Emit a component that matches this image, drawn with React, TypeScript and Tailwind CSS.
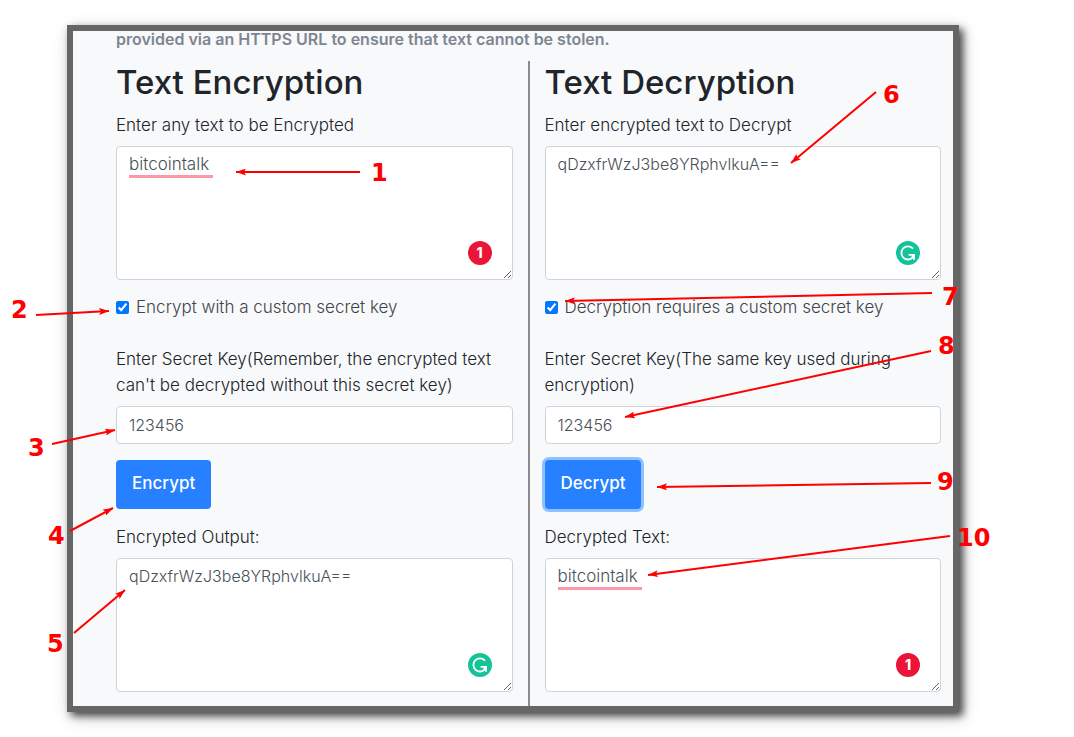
import { useState } from "react"

type TextPanelProps = {
  id: string
  label: string
  value: string
  misspelled?: boolean
  onChange?: (value: string) => void
}

const GrammarBadge = () => {
  return (
    <svg className="w-6 h-6" viewBox="0 0 24 24" fill="none">
      <circle cx="12" cy="12" r="12" fill="#15c39a" />
      <path d="M17 7.6A6.6 6.6 0 1 0 17.2 16" stroke="white" strokeWidth="1.8" />
      <path d="M12.6 13.9H17.9V18.8" stroke="white" strokeWidth="1.8" />
      <path d="M18.6 13.2V18.6L16.9 16.9L14.6 17.2L16.6 14Z" fill="white" />
    </svg>
  )
}

const TextPanel = ({ id, label, value, misspelled, onChange }: TextPanelProps) => {
  return (
    <div className="flex flex-col gap-2">
      <label htmlFor={id}>{label}</label>
      <div className="relative flex">
        <textarea
          id={id}
          value={value}
          spellCheck={false}
          readOnly={!onChange}
          onChange={(e) => onChange?.(e.target.value)}
          className={
            misspelled
              ? "w-full h-[134px] resize rounded border border-[#ced4da] bg-white px-3 py-1 text-[17px] text-[#495057] outline-none"
              : "w-full h-[134px] resize rounded border border-[#ced4da] bg-white px-3 py-1 text-base leading-[26px] text-[#495057] outline-none"
          }
        />
        {misspelled && <span className="absolute left-[13px] top-[29px] w-[84px] h-[3px] bg-[#fd97ab]" />}
        <div className="absolute right-[21px] bottom-[15px]">
          {misspelled ? (
            <span className="flex w-6 h-6 items-center justify-center rounded-full bg-[#ea1537] text-sm font-extrabold text-white">1</span>
          ) : (
            <GrammarBadge />
          )}
        </div>
      </div>
    </div>
  )
}

type CryptoColumnProps = {
  id: string
  title: string
  inputLabel: string
  initialText: string
  checkLabel: string
  keyLabel: string
  action: string
  outputLabel: string
  output: string
  highlighted?: boolean
}

const CryptoColumn = (props: CryptoColumnProps) => {
  const [text, setText] = useState(props.initialText)
  const [secret, setSecret] = useState("123456")
  const { id, highlighted } = props

  return (
    <section className="min-w-0">
      <h2 className="mb-[9px] text-[33px] leading-[42px] font-medium">{props.title}</h2>
      <TextPanel id={`${id}-text`} label={props.inputLabel} value={text} misspelled={!highlighted} onChange={setText} />
      <div className="mt-[14px] flex items-center gap-[7px] text-[#414549]">
        <input id={`${id}-custom`} type="checkbox" defaultChecked className="w-[13px] h-[13px] shrink-0 accent-[#0075ff]" />
        <label htmlFor={`${id}-custom`}>{props.checkLabel}</label>
      </div>
      <div className="mt-[26px] flex flex-col gap-2">
        <label htmlFor={`${id}-key`}>{props.keyLabel}</label>
        <input
          id={`${id}-key`}
          type="text"
          value={secret}
          onChange={(e) => setSecret(e.target.value)}
          className="w-full h-[38px] rounded border border-[#ced4da] bg-white px-3 text-base text-[#495057] outline-none"
        />
      </div>
      <button
        type="button"
        className={
          highlighted
            ? "mt-4 h-[49px] rounded bg-[#2680ff] px-4 pb-[3px] font-medium text-white ring-3 ring-[#8ec1ff]"
            : "mt-4 h-[49px] rounded bg-[#2680ff] px-4 pb-[3px] font-medium text-white"
        }
      >
        {props.action}
      </button>
      <div className="mt-[15px]">
        <TextPanel id={`${id}-output`} label={props.outputLabel} value={props.output} misspelled={highlighted} />
      </div>
    </section>
  )
}

const steps = [
  { n: 1, x: 371, y: 181, from: [360, 172], to: [236, 172] },
  { n: 2, x: 11, y: 318, from: [36, 315], to: [109, 311] },
  { n: 3, x: 28, y: 456, from: [52, 444], to: [115, 430] },
  { n: 4, x: 48, y: 544, from: [70, 531], to: [113, 508] },
  { n: 5, x: 47, y: 652, from: [74, 633], to: [125, 590] },
  { n: 6, x: 883, y: 103, from: [876, 92], to: [791, 163] },
  { n: 7, x: 942, y: 305, from: [932, 293], to: [565, 301] },
  { n: 8, x: 938, y: 354, from: [931, 351], to: [625, 417] },
  { n: 9, x: 937, y: 490, from: [931, 483], to: [657, 487] },
  { n: 10, x: 957, y: 546, from: [950, 536], to: [648, 575] },
]

// numbered arrows drawn on top of the form
const Annotations = () => {
  return (
    <svg className="pointer-events-none absolute left-0 top-0" width="1074" height="737" viewBox="0 0 1074 737">
      <defs>
        <marker id="arrow" viewBox="0 0 10 7" refX="10" refY="3.5" markerWidth="10" markerHeight="7" markerUnits="userSpaceOnUse" orient="auto">
          <path d="M10 3.5L0 0L2 3.5L0 7Z" fill="red" />
        </marker>
      </defs>
      {steps.map((step) => (
        <g key={step.n}>
          <line x1={step.from[0]} y1={step.from[1]} x2={step.to[0]} y2={step.to[1]} stroke="red" strokeWidth="2" markerEnd="url(#arrow)" />
          <text x={step.x} y={step.y} fill="red" className="font-['DejaVu_Sans'] text-2xl font-bold">
            {step.n}
          </text>
        </g>
      ))}
    </svg>
  )
}

const App = () => {
  return (
    <div className="relative bg-white pt-[25px] pb-[25px] pl-[67px] pr-[115px] font-['Inter',sans-serif] text-[17px] leading-[26px] font-light text-[#212529]">
      <main className="border-6 border-[#666666] bg-[#f8f9fb] pl-[43px] pr-3 shadow-[4px_4px_8px_rgba(0,0,0,0.7),3px_5px_18px_rgba(0,0,0,0.15)]">
        <p className="mb-[14px] text-base leading-4 font-semibold text-[#7d8690]">provided via an HTTPS URL to ensure that text cannot be stolen.</p>
        <div className="grid grid-cols-[1fr_2px_1fr] gap-x-[15px]">
          <CryptoColumn
            id="encrypt"
            title="Text Encryption"
            inputLabel="Enter any text to be Encrypted"
            initialText="bitcointalk"
            checkLabel="Encrypt with a custom secret key"
            keyLabel="Enter Secret Key(Remember, the encrypted text can't be decrypted without this secret key)"
            action="Encrypt"
            outputLabel="Encrypted Output:"
            output="qDzxfrWzJ3be8YRphvlkuA=="
          />
          <div className="-mb-[14px] bg-[#8b8b8b]" />
          <CryptoColumn
            id="decrypt"
            title="Text Decryption"
            inputLabel="Enter encrypted text to Decrypt"
            initialText="qDzxfrWzJ3be8YRphvlkuA=="
            checkLabel="Decryption requires a custom secret key"
            keyLabel="Enter Secret Key(The same key used during encryption)"
            action="Decrypt"
            outputLabel="Decrypted Text:"
            output="bitcointalk"
            highlighted
          />
        </div>
        <div className="h-[14px]" />
      </main>
      <Annotations />
    </div>
  )
}

export default App
